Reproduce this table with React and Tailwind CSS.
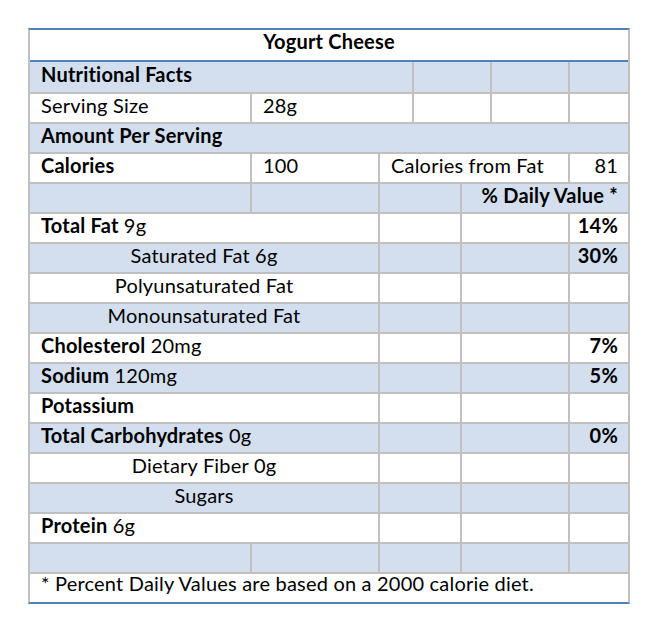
import React from 'react';

// Column grid: widths include each cell's 2px right border
const cols = 'grid grid-cols-[222px_128px_34px_48px_30px_78px_58px]';

const Cell = ({ span = 'col-span-1', last, align = 'left', bold, children }) => {
    const alignCls = align === 'right' ? 'justify-end pr-[10px]' : align === 'center' ? 'justify-center' : 'justify-start pl-[11px]';
    return (
        <div className={`${span} flex items-center whitespace-nowrap pb-[6px] ${alignCls} ${last ? '' : 'border-r-2 border-[#c0c0c0]'} ${bold ? 'font-bold' : ''}`}>
            {children}
        </div>
    );
};

const Row = ({ shade, tall, children }) => (
    <div className={`${cols} ${tall ? 'h-[32px]' : 'h-[30px]'} border-b-2 border-[#c0c0c0] ${shade ? 'bg-[#d3dfee]' : 'bg-white'}`}>
        {children}
    </div>
);

// Nutrient rows: label spans first three columns, then three value columns
const NutrientRow = ({ shade, label, amount, center, dv }) => (
    <Row shade={shade}>
        <Cell span="col-span-2" align={center ? 'center' : 'left'}>
            {label && <b>{label}</b>}
            {amount && <span>{label ? '\u00a0' : ''}{amount}</span>}
        </Cell>
        <Cell span="col-span-2" />
        <Cell span="col-span-2" />
        <Cell last align="right" bold>{dv}</Cell>
    </Row>
);

const App = () => {
    return (
        <div className="w-[666px] h-[630px] bg-white pt-[28px] pl-[28px] text-[20px] leading-none tracking-[0.2px] text-black" style={{ fontFamily: 'Lato, "Open Sans", sans-serif' }}>
            <div className="w-[602px] border-x-2 border-x-[#c0c0c0] border-y-2 border-y-[#4f81bd]">
                {/* Title */}
                <div className="h-[32px] flex items-center justify-center pb-[8px] font-bold border-b-2 border-[#4f81bd] bg-white">
                    Yogurt Cheese
                </div>

                <Row shade tall>
                    <Cell span="col-span-3" bold>Nutritional Facts</Cell>
                    <Cell span="col-span-2" />
                    <Cell />
                    <Cell last />
                </Row>
                <Row>
                    <Cell>Serving Size</Cell>
                    <Cell span="col-span-2">28g</Cell>
                    <Cell span="col-span-2" />
                    <Cell />
                    <Cell last />
                </Row>
                <Row shade>
                    <Cell span="col-span-7" last bold>Amount Per Serving</Cell>
                </Row>
                <Row>
                    <Cell bold>Calories</Cell>
                    <Cell>100</Cell>
                    <Cell span="col-span-4">Calories from Fat</Cell>
                    <Cell last align="right">81</Cell>
                </Row>
                <Row shade>
                    <Cell />
                    <Cell />
                    <Cell span="col-span-2" />
                    <Cell span="col-span-3" last align="right" bold>% Daily Value *</Cell>
                </Row>

                <NutrientRow label="Total Fat" amount="9g" dv="14%" />
                <NutrientRow shade center amount="Saturated Fat 6g" dv="30%" />
                <NutrientRow center amount="Polyunsaturated Fat" />
                <NutrientRow shade center amount="Monounsaturated Fat" />
                <NutrientRow label="Cholesterol" amount="20mg" dv="7%" />
                <NutrientRow shade label="Sodium" amount="120mg" dv="5%" />
                <NutrientRow label="Potassium" />
                <NutrientRow shade label="Total Carbohydrates" amount="0g" dv="0%" />
                <NutrientRow center amount="Dietary Fiber 0g" />
                <NutrientRow shade center amount="Sugars" />
                <NutrientRow label="Protein" amount="6g" />

                <Row shade>
                    <Cell />
                    <Cell />
                    <Cell span="col-span-2" />
                    <Cell span="col-span-2" />
                    <Cell last />
                </Row>

                {/* Footnote */}
                <div className="h-[28px] flex items-center pl-[11px] pb-[10px] bg-white whitespace-nowrap">
                    * Percent Daily Values are based on a 2000 calorie diet.
                </div>
            </div>
        </div>
    );
};

export default App;
